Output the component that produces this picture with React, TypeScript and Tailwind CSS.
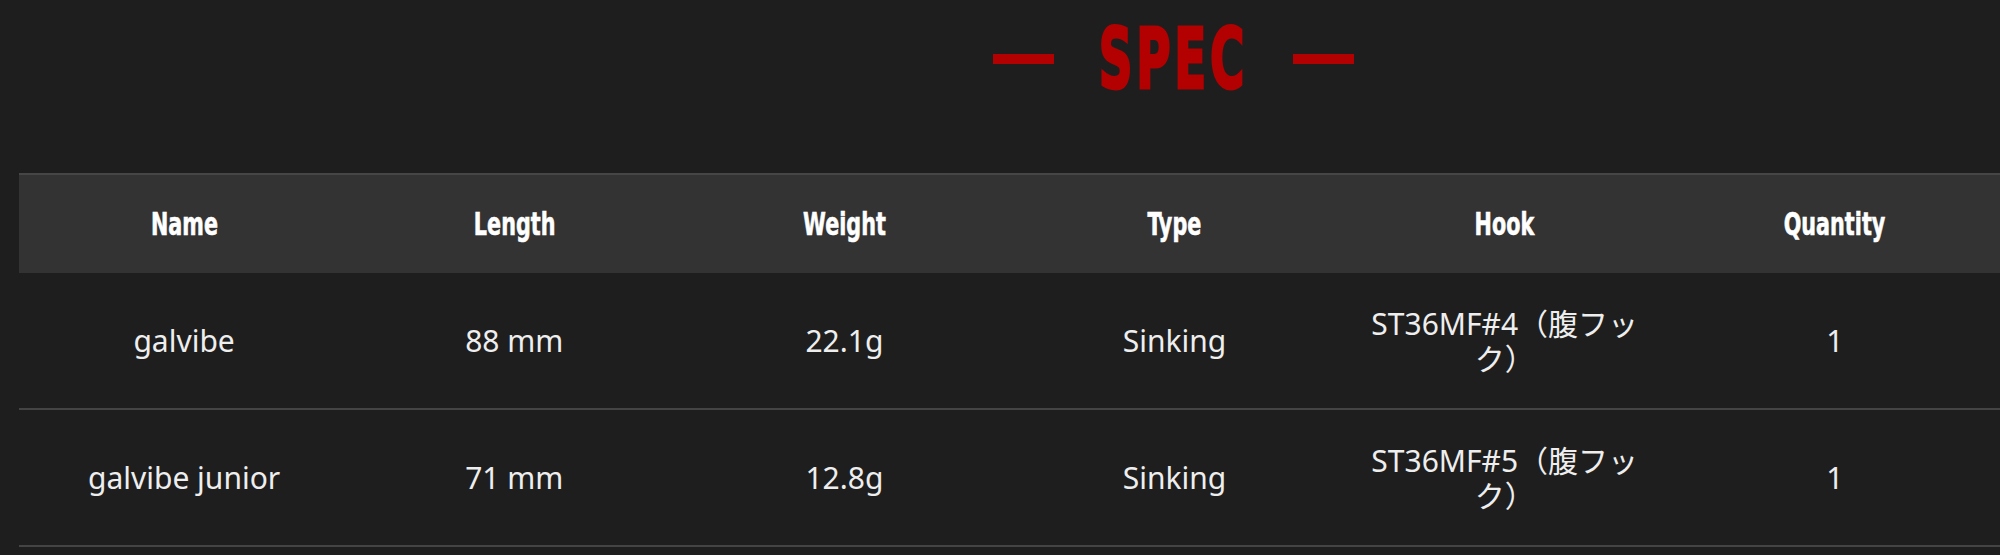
import React from "react";

const heads = ["Name", "Length", "Weight", "Type", "Hook", "Quantity"];
const rows = [
  ["galvibe", "88 mm", "22.1g", "Sinking", "ST36MF#4（腹フック）", "1"],
  ["galvibe junior", "71 mm", "12.8g", "Sinking", "ST36MF#5（腹フック）", "1"],
];

const headFont = {
  fontFamily: '"DejaVu Sans Condensed", "DejaVu Sans", "Liberation Sans", sans-serif',
};

export default function App() {
  return (
    <div className="min-h-[555px] w-[2000px] bg-[#1e1e1e] overflow-hidden">
      <div className="h-[118px] pl-[346px] flex items-center justify-center gap-[44px]">
        <div className="w-[61px] h-[10px] bg-[#b30000]" />
        <div className="w-[151px] flex justify-center">
          <span
            className="inline-block text-[84px] leading-none font-bold text-[#b30000] tracking-[6px] scale-x-[0.62] whitespace-nowrap [-webkit-text-stroke:3px_#b30000]"
            style={headFont}
          >
            SPEC
          </span>
        </div>
        <div className="w-[61px] h-[10px] bg-[#b30000]" />
      </div>
      <div className="mt-[55px] ml-[19px] w-[1981px]">
        <div className="grid grid-cols-6 h-[100px] bg-[#333333] border-t-2 border-[#464646]">
          {heads.map((h) => (
            <div key={h} className="flex items-center justify-center">
              <span
                className="inline-block text-[32px] leading-none font-bold text-white scale-x-[0.72] [-webkit-text-stroke:0.6px_#ffffff]"
                style={headFont}
              >
                {h}
              </span>
            </div>
          ))}
        </div>
        {rows.map((r, i) => (
          <div
            key={i}
            className="grid grid-cols-6 h-[137px] border-b-2 border-[#444444]"
          >
            {r.map((c, j) => (
              <div key={j} className="flex items-center justify-center">
                <span
                  className={
                    "text-[30px] text-[#eeeeee] text-center " +
                    (j === 4 ? "w-[290px] leading-[35px]" : "leading-none")
                  }
                  style={{
                    fontFamily:
                      '"Noto Sans", "Noto Sans CJK JP", sans-serif',
                  }}
                >
                  {c}
                </span>
              </div>
            ))}
          </div>
        ))}
      </div>
    </div>
  );
}
